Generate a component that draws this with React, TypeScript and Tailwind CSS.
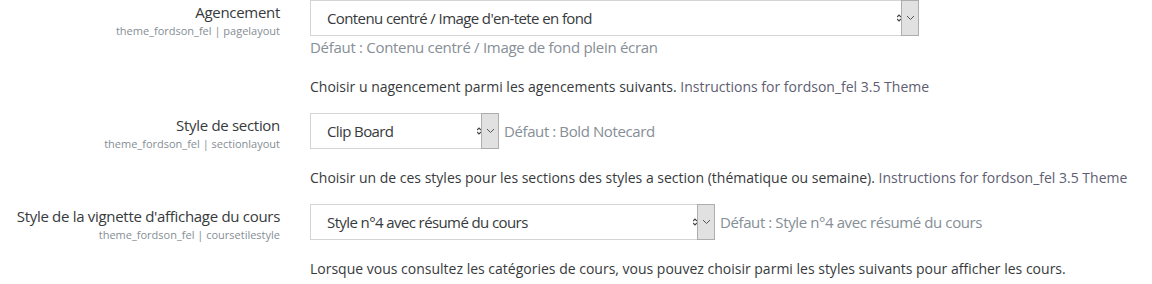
import React from "react";

type Row = {
  label: string;
  setting: string;
  value: string;
  width: string;
  def: string;
  inlineDefault: boolean;
  desc: string;
  link?: string;
};

const rows: Row[] = [
  {
    label: "Agencement",
    setting: "theme_fordson_fel | pagelayout",
    value: "Contenu centré / Image d'en-tete en fond",
    width: "w-[609px]",
    def: "Défaut : Contenu centré / Image de fond plein écran",
    inlineDefault: false,
    desc: "Choisir u nagencement parmi les agencements suivants.",
    link: "Instructions for fordson_fel 3.5 Theme",
  },
  {
    label: "Style de section",
    setting: "theme_fordson_fel | sectionlayout",
    value: "Clip Board",
    width: "w-[189px]",
    def: "Défaut : Bold Notecard",
    inlineDefault: true,
    desc: "Choisir un de ces styles pour les sections des styles a section (thématique ou semaine).",
    link: "Instructions for fordson_fel 3.5 Theme",
  },
  {
    label: "Style de la vignette d'affichage du cours",
    setting: "theme_fordson_fel | coursetilestyle",
    value: "Style n°4 avec résumé du cours",
    width: "w-[405px]",
    def: "Défaut : Style n°4 avec résumé du cours",
    inlineDefault: true,
    desc: "Lorsque vous consultez les catégories de cours, vous pouvez choisir parmi les styles suivants pour afficher les cours.",
  },
];

const FakeSelect = ({ value, width }: { value: string; width: string }) => (
  <div
    className={`${width} h-[36px] flex border border-[#d4d4d4] bg-white shrink-0`}
  >
    <div className="flex-1 flex items-center pl-4 text-[15px] text-[#373a3c] leading-none tracking-[-0.6px]">
      {value}
    </div>
    {/* native arrows peeking behind the button */}
    <div className="w-[4px] flex items-center">
      <svg width="4" height="8" viewBox="0 0 4 8">
        <path d="M0 3 L2 1 L4 3" stroke="#444" strokeWidth="1.2" fill="none" />
        <path d="M0 5 L2 7 L4 5" stroke="#444" strokeWidth="1.2" fill="none" />
      </svg>
    </div>
    <div className="w-[18px] -my-px -mr-px bg-[#e1e1e1] border border-[#adadad] flex items-center justify-center">
      <svg width="9" height="6" viewBox="0 0 9 6">
        <path d="M1 1 L4.5 4.5 L8 1" stroke="#555" strokeWidth="1" fill="none" />
      </svg>
    </div>
  </div>
);

export default function App() {
  return (
    <div
      className="w-[1152px] h-[284px] bg-white overflow-hidden"
      style={{ fontFamily: "'Open Sans', 'Noto Sans', sans-serif" }}
    >
      {rows.map((r, i) => (
        <div
          key={i}
          className={`grid grid-cols-[280px_1fr] gap-x-[30px] ${i > 0 ? "mt-[15px]" : ""}`}
        >
          <div className="text-right pt-px">
            <div className="text-[15px] leading-[22px] text-[#373a3c] tracking-[-0.3px]">
              {r.label}
            </div>
            <div className="text-[11px] leading-[16px] text-[#868e96]">
              {r.setting}
            </div>
          </div>
          <div>
            <div className="flex items-center gap-[5px]">
              <FakeSelect value={r.value} width={r.width} />
              {r.inlineDefault && (
                <span className="text-[15px] text-[#868e96] tracking-[-0.4px]">
                  {r.def}
                </span>
              )}
            </div>
            {!r.inlineDefault && (
              <div className="text-[15px] leading-[22px] text-[#868e96] tracking-[-0.3px]">
                {r.def}
              </div>
            )}
            <div className="mt-[18px] text-[14px] leading-[22px] text-[#373a3c]">
              {r.desc}
              {r.link && (
                <span className="text-[#5e5e72]"> {r.link}</span>
              )}
            </div>
          </div>
        </div>
      ))}
    </div>
  );
}
